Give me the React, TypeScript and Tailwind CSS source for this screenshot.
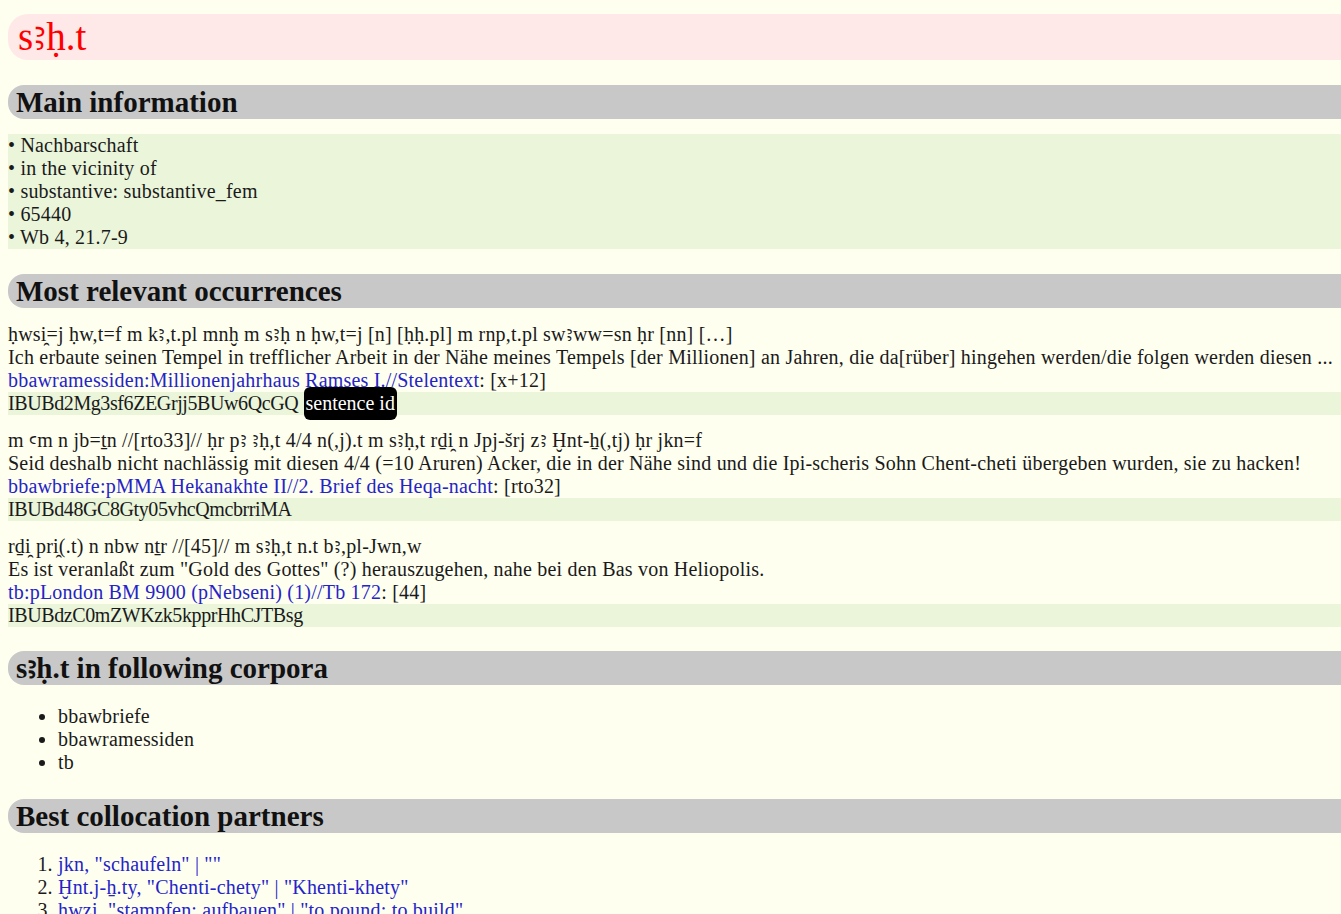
const serif = "font-['Liberation_Serif','DejaVu_Serif',serif]";

function Header({ children, className = "mt-[25px]" }: { children: React.ReactNode; className?: string }) {
  return (
    <h2 className={`${className} h-[34px] bg-[#c8c8c8] rounded-l-[16px] pl-[8px] text-[29px] leading-[34px] font-bold text-[#111] tracking-normal`}>
      {children}
    </h2>
  );
}

interface Occurrence {
  translit: string;
  translation: string;
  source: string;
  loc: string;
  id: string;
  badge?: boolean;
}

const occurrences: Occurrence[] = [
  {
    translit: "ḥwsi̯=j ḥw,t=f m kꜣ,t.pl mnḫ m sꜣḥ n ḥw,t=j [n] [ḥḥ.pl] m rnp,t.pl swꜣww=sn ḥr [nn] […]",
    translation:
      "Ich erbaute seinen Tempel in trefflicher Arbeit in der Nähe meines Tempels [der Millionen] an Jahren, die da[rüber] hingehen werden/die folgen werden diesen ...",
    source: "bbawramessiden:Millionenjahrhaus Ramses I.//Stelentext",
    loc: "[x+12]",
    id: "IBUBd2Mg3sf6ZEGrjj5BUw6QcGQ",
    badge: true,
  },
  {
    translit: "m ꜥm n jb=ṯn //[rto33]// ḥr pꜣ ꜣḥ,t 4/4 n(,j).t m sꜣḥ,t rḏi̯ n Jpj-šrj zꜣ Ḫnt-ẖ(,tj) ḥr jkn=f",
    translation:
      "Seid deshalb nicht nachlässig mit diesen 4/4 (=10 Aruren) Acker, die in der Nähe sind und die Ipi-scheris Sohn Chent-cheti übergeben wurden, sie zu hacken!",
    source: "bbawbriefe:pMMA Hekanakhte II//2. Brief des Heqa-nacht",
    loc: "[rto32]",
    id: "IBUBd48GC8Gty05vhcQmcbrriMA",
  },
  {
    translit: "rḏi̯ pri̯(.t) n nbw nṯr //[45]// m sꜣḥ,t n.t bꜣ,pl-Jwn,w",
    translation:
      'Es ist veranlaßt zum "Gold des Gottes" (?) herauszugehen, nahe bei den Bas von Heliopolis.',
    source: "tb:pLondon BM 9900 (pNebseni) (1)//Tb 172",
    loc: "[44]",
    id: "IBUBdzC0mZWKzk5kpprHhCJTBsg",
  },
];

const partners = [
  'jkn, "schaufeln" | ""',
  'Ḫnt.j-ẖ.ty, "Chenti-chety" | "Khenti-khety"',
  'ḥwzi̯, "stampfen; aufbauen" | "to pound; to build"',
];

export default function App() {
  return (
    <div className={`min-h-screen bg-[#fffff0] text-[#1a1a1a] ${serif} text-[20px] leading-[23px] tracking-[0.2px] pl-[8px] pt-[14px] pb-10 overflow-hidden`}>
      <div className="h-[46px] bg-[#ffe8e8] rounded-l-[20px] pl-[10px] text-[39px] leading-[46px] text-[#ff0000] tracking-normal">
        sꜣḥ.t
      </div>

      <Header>Main information</Header>
      <div className="mt-[15px] bg-[#eaf5da]">
        <div className="h-[23px]">• Nachbarschaft</div>
        <div className="h-[23px]">• in the vicinity of</div>
        <div className="h-[23px]">• substantive: substantive_fem</div>
        <div className="h-[23px]">• 65440</div>
        <div className="h-[23px]">• Wb 4, 21.7-9</div>
      </div>

      <Header>Most relevant occurrences</Header>
      {occurrences.map((o, i) => (
        <div key={i} className={i === 0 ? "mt-[15px]" : "mt-[14px]"}>
          <div className="h-[23px] whitespace-nowrap">{o.translit}</div>
          <div className="h-[23px] whitespace-nowrap">{o.translation}</div>
          <div className="h-[23px] whitespace-nowrap">
            <a className="text-[#2424c8]">{o.source}</a>: {o.loc}
          </div>
          <div className="h-[23px] bg-[#eaf5da] whitespace-nowrap">
            <span className="tracking-[-0.4px]">{o.id}</span>
            {o.badge && (
              <>
                {" "}
                <span className="inline-block bg-black text-white rounded-[6px] px-[2px] py-[5px] -my-[5px] leading-[23px] align-baseline tracking-normal">
                  sentence id
                </span>
              </>
            )}
          </div>
        </div>
      ))}

      <Header className="mt-[24px]">sꜣḥ.t in following corpora</Header>
      <ul className="mt-[20px] list-disc pl-[50px]">
        <li className="h-[23px]">bbawbriefe</li>
        <li className="h-[23px]">bbawramessiden</li>
        <li className="h-[23px]">tb</li>
      </ul>

      <Header>Best collocation partners</Header>
      <ol className="mt-[20px] list-decimal pl-[50px]">
        {partners.map((p, i) => (
          <li key={i} className="h-[23px]">
            <a className="text-[#2424c8]">{p}</a>
          </li>
        ))}
      </ol>
    </div>
  );
}
